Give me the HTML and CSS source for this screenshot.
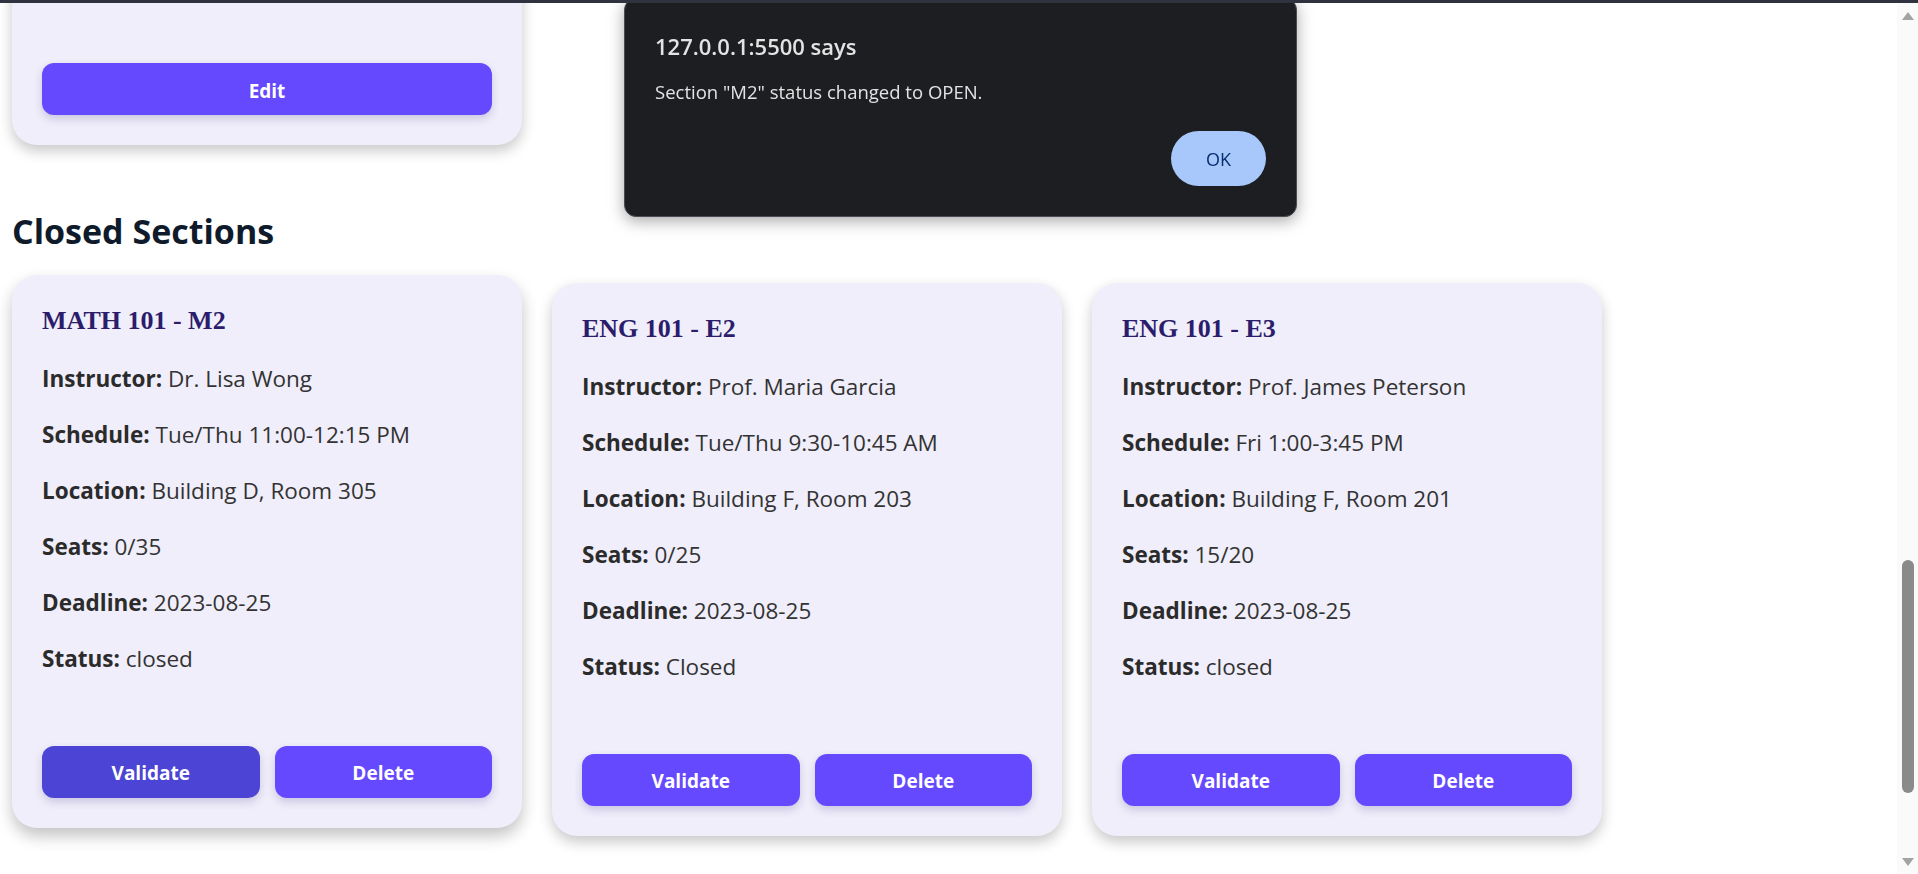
FILE: index.html
```html
<!DOCTYPE html>
<html lang="en">
<head>
<meta charset="utf-8">
<title>Course Sections</title>
<link rel="stylesheet" href="styles.css">
</head>
<body>
<div class="topline"></div>
<main class="page">
  <section class="section">
    <div class="card-grid">
      <article class="card card-tail">
        <div class="card-actions"><button class="btn">Edit</button></div>
      </article>
    </div>
  </section>
  <section class="section">
    <h2 class="section-title">Closed Sections</h2>
    <div class="card-grid">
      <article class="card is-hover">
        <h3 class="card-title">MATH 101 - M2</h3>
        <p><strong>Instructor:</strong> Dr. Lisa Wong</p>
        <p><strong>Schedule:</strong> Tue/Thu 11:00-12:15 PM</p>
        <p><strong>Location:</strong> Building D, Room 305</p>
        <p><strong>Seats:</strong> 0/35</p>
        <p><strong>Deadline:</strong> 2023-08-25</p>
        <p><strong>Status:</strong> closed</p>
        <div class="card-actions"><button class="btn is-hover">Validate</button><button class="btn">Delete</button></div>
      </article>
      <article class="card">
        <h3 class="card-title">ENG 101 - E2</h3>
        <p><strong>Instructor:</strong> Prof. Maria Garcia</p>
        <p><strong>Schedule:</strong> Tue/Thu 9:30-10:45 AM</p>
        <p><strong>Location:</strong> Building F, Room 203</p>
        <p><strong>Seats:</strong> 0/25</p>
        <p><strong>Deadline:</strong> 2023-08-25</p>
        <p><strong>Status:</strong> Closed</p>
        <div class="card-actions"><button class="btn">Validate</button><button class="btn">Delete</button></div>
      </article>
      <article class="card">
        <h3 class="card-title">ENG 101 - E3</h3>
        <p><strong>Instructor:</strong> Prof. James Peterson</p>
        <p><strong>Schedule:</strong> Fri 1:00-3:45 PM</p>
        <p><strong>Location:</strong> Building F, Room 201</p>
        <p><strong>Seats:</strong> 15/20</p>
        <p><strong>Deadline:</strong> 2023-08-25</p>
        <p><strong>Status:</strong> closed</p>
        <div class="card-actions"><button class="btn">Validate</button><button class="btn">Delete</button></div>
      </article>
    </div>
  </section>
</main>

<div class="alert" role="alertdialog">
  <div class="alert-title">127.0.0.1:5500 says</div>
  <div class="alert-message">Section "M2" status changed to OPEN.</div>
  <div class="alert-actions"><button class="alert-ok">OK</button></div>
</div>

<div class="scrollbar">
  <div class="scroll-arrow scroll-arrow-up"></div>
  <div class="scroll-thumb"></div>
  <div class="scroll-arrow scroll-arrow-down"></div>
</div>
</body>
</html>
```

FILE: styles.css
```css
* { box-sizing: border-box; }
html, body { margin: 0; height: 100%; }
body {
  background: #ffffff;
  font-family: "Open Sans", "Noto Sans", sans-serif;
  color: #333333;
  overflow: hidden;
}
.topline {
  position: fixed;
  top: 0; left: 0; right: 0;
  height: 3px;
  background: #2f3340;
  z-index: 30;
}
.page { padding: 0 12px; }
.card-grid {
  display: flex;
  gap: 30px;
  align-items: flex-start;
}
.card {
  width: 510px;
  background: #f0eefa;
  border-radius: 25px;
  padding: 30px;
  box-shadow: 0 6px 14px rgba(0, 0, 0, 0.22);
  display: flex;
  flex-direction: column;
}
.card.is-hover {
  transform: translateY(-8px);
  box-shadow: 0 8px 16px rgba(0, 0, 0, 0.24);
}
.card-tail {
  margin-top: -60px;
  padding-top: 123px;
}
.section-title {
  font-size: 34px;
  line-height: 44px;
  font-weight: 700;
  color: #0f1b2b;
  margin: 64px 0 30px;
}
.card-title {
  font-family: "Liberation Serif", "Times New Roman", serif;
  font-size: 26px;
  line-height: 32px;
  font-weight: 700;
  color: #2c1c6c;
  margin: 0 0 26.2px;
}
.card p {
  margin: 0 0 24px;
  font-size: 22.5px;
  line-height: 32px;
}
.card p:last-of-type { margin-bottom: 0; }
.card strong { font-weight: 700; color: #2b2b2b; }
.card-actions {
  display: flex;
  gap: 15px;
  margin-top: 70.5px;
}
.card-tail .card-actions { margin-top: 0; }
.btn {
  flex: 1;
  height: 52px;
  border: 0;
  border-radius: 12px;
  padding: 3px 0 0;
  background: #6549fe;
  color: #ffffff;
  font-family: "Open Sans", "Noto Sans", sans-serif;
  font-weight: 700;
  font-size: 19px;
  box-shadow: 0 4px 8px rgba(50, 40, 140, 0.2);
}
.btn.is-hover { background: #4b44d5; }

.alert {
  position: fixed;
  left: 624px;
  top: -2px;
  width: 673px;
  height: 219px;
  background: #1c1e22;
  border: 1px solid #4a4d53;
  border-radius: 12px;
  box-shadow: 0 4px 16px rgba(0, 0, 0, 0.35);
  padding: 33px 30px 30px;
  display: flex;
  flex-direction: column;
  color: #e3e3e3;
  z-index: 20;
}
.alert-title {
  font-size: 22px;
  line-height: 28px;
  font-weight: 600;
  margin-bottom: 22px;
}
.alert-message {
  font-size: 18.5px;
  line-height: 20px;
}
.alert-actions {
  margin-top: auto;
  display: flex;
  justify-content: flex-end;
}
.alert-ok {
  width: 95px;
  height: 55px;
  border: 0;
  border-radius: 28px;
  background: #a8c7fa;
  color: #062e6f;
  font-family: "Open Sans", "Noto Sans", sans-serif;
  font-size: 18px;
  font-weight: 500;
}

.scrollbar {
  position: fixed;
  top: 3px; right: 0; bottom: 0;
  width: 21px;
  background: #fafafa;
  z-index: 25;
}
.scroll-thumb {
  position: absolute;
  left: 5px;
  width: 12px;
  top: 557px;
  height: 233px;
  border-radius: 6px;
  background: #8a8a8a;
}
.scroll-arrow {
  position: absolute;
  left: 5px;
  width: 0; height: 0;
  border-left: 6px solid transparent;
  border-right: 6px solid transparent;
}
.scroll-arrow-up { top: 9px; border-bottom: 8px solid #a3a3a3; }
.scroll-arrow-down { bottom: 8px; border-top: 8px solid #a3a3a3; }
```
